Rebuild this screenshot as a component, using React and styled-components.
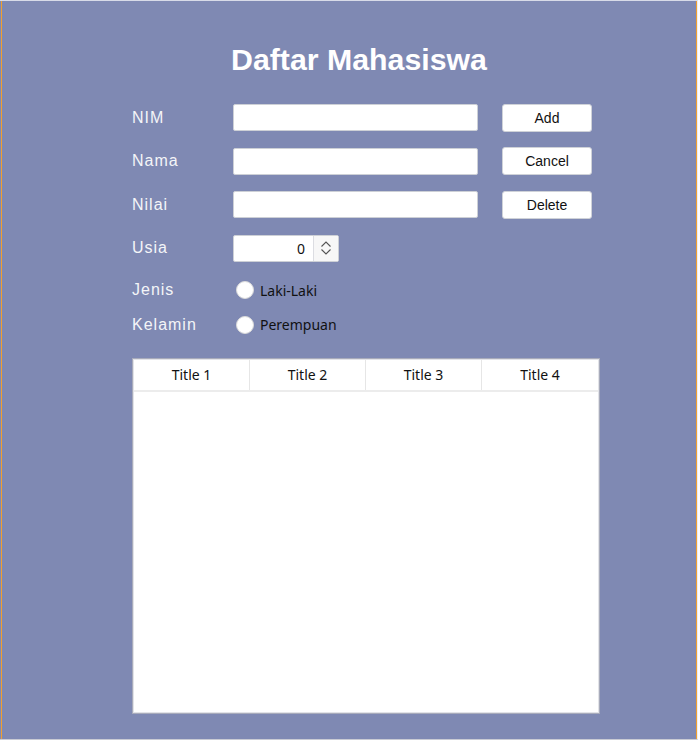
import React from 'react';
import styled, { createGlobalStyle } from 'styled-components';

const GlobalStyle = createGlobalStyle`
  html, body {
    margin: 0;
    padding: 0;
    background: #7f89b3;
  }
  * {
    box-sizing: border-box;
  }
`;

const Frame = styled.div`
  width: 698px;
  height: 740px;
  padding-left: 1px;
  background: #7f89b3;
  border-top: 1px solid #d8dbe8;
  border-bottom: 1px solid #c9cbd4;
  border-right: 1px solid #eceef4;
`;

const Panel = styled.div`
  height: 100%;
  border-left: 1px solid #f0a030;
  border-right: 1px solid #f0a030;
  display: flex;
  flex-direction: column;
  align-items: flex-start;
  padding-left: 130px;
`;

const Title = styled.h1`
  margin: 41px 0 0 99px;
  font-family: 'Liberation Sans', Arial, sans-serif;
  font-size: 30.3px;
  line-height: 36px;
  font-weight: bold;
  color: #ffffff;
`;

const Form = styled.div`
  margin-top: 26px;
  width: 460px;
  display: grid;
  grid-template-columns: 77px 245px 90px;
  column-gap: 24px;
  grid-template-rows: 27px 27px 27px 27px 18px 18px;
  row-gap: 16.5px;
  align-items: center;
`;

const Label = styled.div`
  font-family: 'Liberation Sans', Arial, sans-serif;
  font-size: 16px;
  letter-spacing: 1px;
  color: #f4f5f8;
  white-space: nowrap;
  margin-top: ${({ $shift }) => $shift || 0}px;
`;

const TextInput = styled.input`
  height: 27px;
  width: 100%;
  border: 1px solid #cdd0d6;
  border-radius: 2px;
  background: #ffffff;
  outline: none;
`;

const Button = styled.button`
  height: 28px;
  width: 90px;
  border: 1px solid #cfd2d8;
  border-radius: 3px;
  background: #ffffff;
  font-family: 'Liberation Sans', Arial, sans-serif;
  font-size: 14px;
  color: #111111;
  padding: 0;
  cursor: pointer;
`;

const Empty = styled.div``;

const Spinner = styled.div`
  display: flex;
  width: 106px;
  height: 27px;
  border: 1px solid #cdd0d6;
  border-radius: 2px;
  background: #ffffff;
  overflow: hidden;
`;

const SpinValue = styled.div`
  flex: 1;
  display: flex;
  align-items: center;
  justify-content: flex-end;
  padding-right: 8px;
  font-family: 'Noto Sans', 'Open Sans', sans-serif;
  font-size: 14px;
  color: #111111;
  border-right: 1px solid #dcdde2;
`;

const SpinButton = styled.div`
  width: 24px;
  display: flex;
  align-items: center;
  justify-content: center;
  background: #f7f7f7;
`;

const RadioRow = styled.label`
  display: flex;
  align-items: center;
  gap: 6px;
  margin-left: 3px;
  margin-top: 6px;
  font-family: 'Noto Sans', 'Open Sans', sans-serif;
  font-size: 14px;
  color: #111111;
  grid-column: 2 / 4;
`;

const RadioDot = styled.span`
  width: 18px;
  height: 18px;
  border-radius: 50%;
  background: #ffffff;
  border: 1px solid #dadada;
`;

const Table = styled.div`
  margin-top: 27px;
  width: 468px;
  height: 356px;
  background: #ffffff;
  border: 1px solid #a8abbb;
  box-shadow: inset 0 0 0 1px #e2e3e8;
  padding: 1px;
`;

const HeaderRow = styled.div`
  display: grid;
  grid-template-columns: repeat(4, 1fr);
  height: 32px;
  border-bottom: 2px solid #ececec;
`;

const HeaderCell = styled.div`
  display: flex;
  align-items: center;
  justify-content: center;
  font-family: 'Noto Sans', 'Open Sans', sans-serif;
  font-size: 14px;
  color: #111111;
  border-right: ${({ $last }) => ($last ? 'none' : '1px solid #e6e6e6')};
`;

const Chevrons = () => (
  <svg width="12" height="16" viewBox="0 0 12 16" fill="none">
    <path d="M1.5 6.5 L6 2 L10.5 6.5" stroke="#555" strokeWidth="1.1" />
    <path d="M1.5 9.5 L6 14 L10.5 9.5" stroke="#555" strokeWidth="1.1" />
  </svg>
);

const App = () => {
  return (
    <>
      <GlobalStyle />
      <Frame>
        <Panel>
          <Title>Daftar Mahasiswa</Title>
          <Form>
            <Label>NIM</Label>
            <TextInput type='text' />
            <Button>Add</Button>

            <Label>Nama</Label>
            <TextInput type='text' />
            <Button>Cancel</Button>

            <Label>Nilai</Label>
            <TextInput type='text' />
            <Button>Delete</Button>

            <Label>Usia</Label>
            <Spinner>
              <SpinValue>0</SpinValue>
              <SpinButton>
                <Chevrons />
              </SpinButton>
            </Spinner>
            <Empty />

            <Label $shift={6}>Jenis</Label>
            <RadioRow>
              <RadioDot />
              Laki-Laki
            </RadioRow>

            <Label $shift={6}>Kelamin</Label>
            <RadioRow>
              <RadioDot />
              Perempuan
            </RadioRow>
          </Form>
          <Table>
            <HeaderRow>
              <HeaderCell>Title 1</HeaderCell>
              <HeaderCell>Title 2</HeaderCell>
              <HeaderCell>Title 3</HeaderCell>
              <HeaderCell $last>Title 4</HeaderCell>
            </HeaderRow>
          </Table>
        </Panel>
      </Frame>
    </>
  );
};

export default App;
